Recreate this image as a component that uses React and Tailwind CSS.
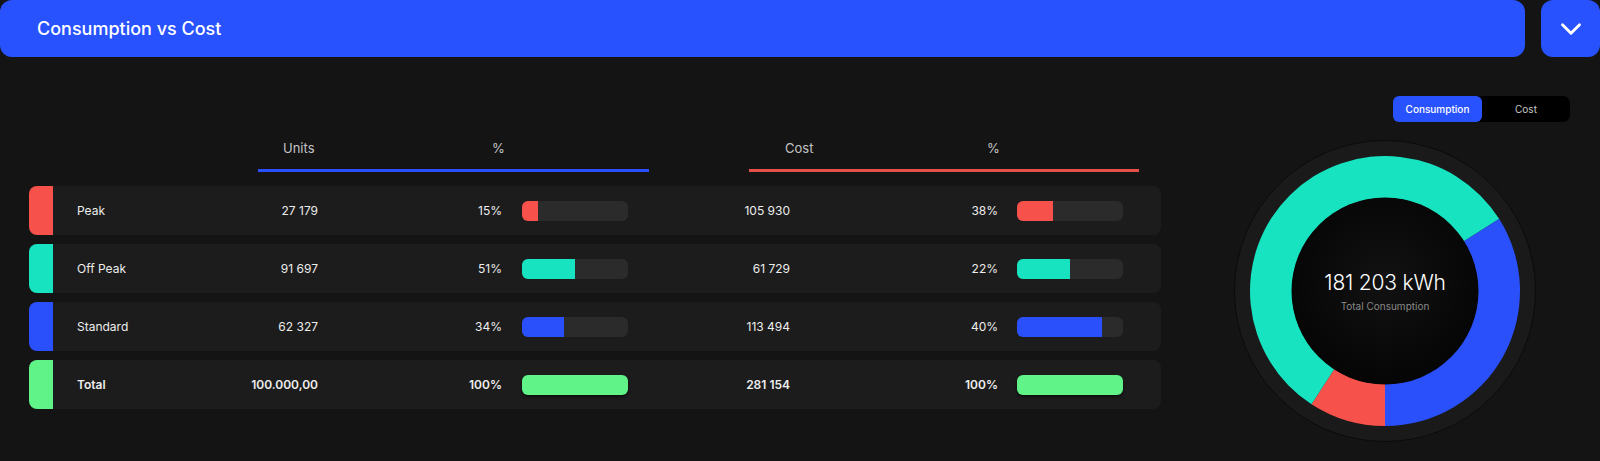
import React from "react";
import { ChevronDown } from "lucide-react";

const rows = [
  { label: "Peak", color: "bg-[#f6514a]", units: "27 179", pct: "15%", uFill: 15, cost: "105 930", cPct: "38%", cFill: 34 },
  { label: "Off Peak", color: "bg-[#17e3c1]", units: "91 697", pct: "51%", uFill: 50, cost: "61 729", cPct: "22%", cFill: 50 },
  { label: "Standard", color: "bg-[#2a50fb]", units: "62 327", pct: "34%", uFill: 40, cost: "113 494", cPct: "40%", cFill: 80 },
  { label: "Total", color: "bg-[#5ff388]", units: "100.000,00", pct: "100%", uFill: 100, cost: "281 154", cPct: "100%", cFill: 100, total: true },
];

function Bar({ fill, color, total }) {
  return (
    <div className={`h-[20px] w-[106px] rounded-[6px] bg-[#2b2b2b] overflow-hidden ${total ? "shadow-[0_2px_3px_rgba(0,0,0,0.5)]" : ""}`}>
      <div className={`h-full ${color}`} style={{ width: `${fill}%` }} />
    </div>
  );
}

// annular segment, angles in degrees clockwise from 12 o'clock
function arc(cx, cy, r1, r2, a0, a1) {
  const p = (r, a) => {
    const t = ((a - 90) * Math.PI) / 180;
    return `${(cx + r * Math.cos(t)).toFixed(2)} ${(cy + r * Math.sin(t)).toFixed(2)}`;
  };
  const large = a1 - a0 > 180 ? 1 : 0;
  return `M ${p(r2, a0)} A ${r2} ${r2} 0 ${large} 1 ${p(r2, a1)} L ${p(r1, a1)} A ${r1} ${r1} 0 ${large} 0 ${p(r1, a0)} Z`;
}

function Donut() {
  const c = 151;
  return (
    <div className="relative w-[302px] h-[302px]">
      <svg width="302" height="302" viewBox="0 0 302 302">
        <defs>
          <radialGradient id="inner" cx="50%" cy="45%" r="55%">
            <stop offset="0%" stopColor="#121212" />
            <stop offset="100%" stopColor="#050505" />
          </radialGradient>
        </defs>
        <circle cx={c} cy={c} r="150.5" fill="#1a1a1a" stroke="#0b0b0b" strokeWidth="1" />
        <path d={arc(c, c, 93, 135, 57.7, 180)} fill="#2a50fb" />
        <path d={arc(c, c, 93, 135, 180, 213)} fill="#f6514a" />
        <path d={arc(c, c, 93, 135, 213, 417.7)} fill="#17e3c1" />
        <circle cx={c} cy={c} r="93.5" fill="url(#inner)" />
      </svg>
      <div className="absolute inset-0 flex flex-col items-center justify-center pt-[1px]">
        <div className="text-[21px] font-light text-white leading-none tracking-[-0.2px]">181 203 kWh</div>
        <div className="text-[10px] text-[#8a8a8a] mt-[8px] leading-none">Total Consumption</div>
      </div>
    </div>
  );
}

export default function App() {
  return (
    <div className="w-[1600px] h-[461px] bg-[#141414] overflow-hidden" style={{ fontFamily: "Inter, 'Noto Sans', sans-serif" }}>
      {/* header */}
      <div className="flex gap-[16px] h-[57px]">
        <div className="flex-1 bg-[#2952ff] rounded-[12px] flex items-center pl-[37px]">
          <span className="text-white text-[18px] font-medium">Consumption vs Cost</span>
        </div>
        <div className="w-[59px] bg-[#2952ff] rounded-[12px] flex items-center justify-center">
          <ChevronDown size={34} strokeWidth={2} className="text-white" />
        </div>
      </div>

      <div className="flex">
        {/* table */}
        <div className="w-[1161px] pl-[29px] pt-[79px]">
          <div className="flex h-[36px] text-[13px] text-[#c4c4c4]">
            <div className="ml-[229px] w-[391px] relative border-b-[3px] border-[#2a50fb]">
              <span className="absolute left-[25px] top-[3px]">Units</span>
              <span className="absolute left-[234px] top-[3px]">%</span>
            </div>
            <div className="ml-[100px] w-[390px] relative border-b-[3px] border-[#e5504a]">
              <span className="absolute left-[36px] top-[3px]">Cost</span>
              <span className="absolute left-[238px] top-[3px]">%</span>
            </div>
          </div>

          <div className="mt-[14px] flex flex-col gap-[9px]">
            {rows.map((r) => (
              <div key={r.label} className="flex h-[49px]">
                <div className={`w-[24px] rounded-l-[8px] ${r.color}`} />
                <div className={`flex-1 flex items-center bg-[#1c1c1c] rounded-r-[8px] text-[12px] text-[#ededed] ${r.total ? "font-semibold" : ""}`}>
                  <div className="w-[150px] pl-[24px]">{r.label}</div>
                  <div className="w-[115px] text-right">{r.units}</div>
                  <div className="w-[184px] text-right">{r.pct}</div>
                  <div className="ml-[20px]">
                    <Bar fill={r.uFill} color={r.color} total={r.total} />
                  </div>
                  <div className="w-[162px] text-right">{r.cost}</div>
                  <div className="w-[208px] text-right">{r.cPct}</div>
                  <div className="ml-[19px]">
                    <Bar fill={r.cFill} color={r.color} total={r.total} />
                  </div>
                </div>
              </div>
            ))}
          </div>
        </div>

        {/* chart */}
        <div className="flex-1 flex flex-col items-end pr-[30px] pt-[39px]">
          <div className="flex w-[177px] h-[26px] bg-black rounded-[7px] text-[10px]">
            <div className="w-[89px] bg-[#2952ff] rounded-[6px] flex items-center justify-center text-white font-medium">Consumption</div>
            <div className="flex-1 flex items-center justify-center text-[#c9c9c9]">Cost</div>
          </div>
          <div className="mt-[18px] mr-[34px]">
            <Donut />
          </div>
        </div>
      </div>
    </div>
  );
}
